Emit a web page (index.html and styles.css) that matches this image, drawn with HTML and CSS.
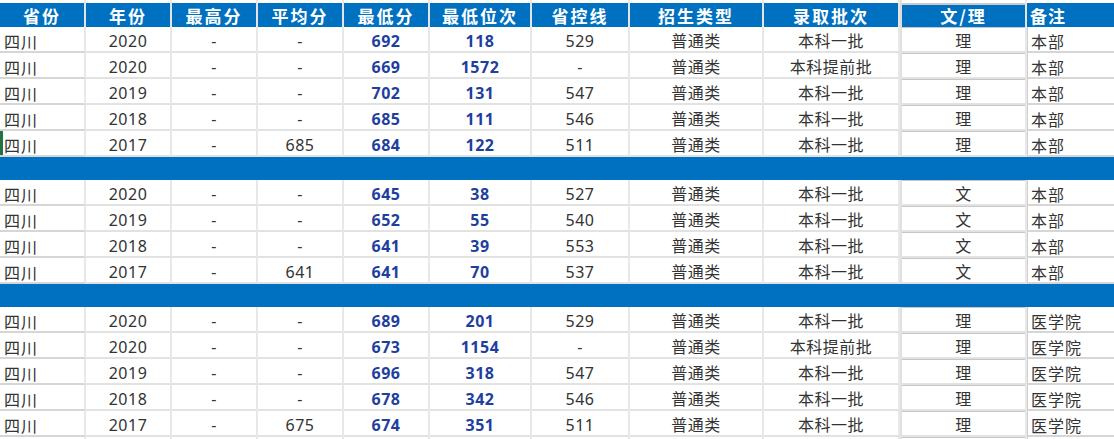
FILE: index.html
```html
<!DOCTYPE html>
<html lang="zh-CN">
<head>
<meta charset="utf-8">
<title>录取分数</title>
<link rel="stylesheet" href="styles.css">
</head>
<body>
<table class="sheet">
  <colgroup>
    <col class="c86"><col class="c86"><col class="c86"><col class="c86"><col class="c86">
    <col class="c102"><col class="c98"><col class="c134"><col class="c136"><col class="c127"><col class="c87">
  </colgroup>
  <tbody>
    <tr class="strip"><td></td><td></td><td></td><td></td><td></td><td></td><td></td><td></td><td></td><td class="wl"></td><td></td></tr>
    <tr class="head">
      <th>省份</th><th>年份</th><th>最高分</th><th>平均分</th><th>最低分</th><th>最低位次</th><th>省控线</th><th>招生类型</th><th>录取批次</th><th class="wl">文/理</th><th class="note">备注</th>
    </tr>
    <tr><td class="prov">四川</td><td>2020</td><td>-</td><td>-</td><td class="b">692</td><td class="b">118</td><td>529</td><td>普通类</td><td>本科一批</td><td class="wl">理</td><td class="note">本部</td></tr>
    <tr><td class="prov">四川</td><td>2020</td><td>-</td><td>-</td><td class="b">669</td><td class="b">1572</td><td>-</td><td>普通类</td><td>本科提前批</td><td class="wl">理</td><td class="note">本部</td></tr>
    <tr><td class="prov">四川</td><td>2019</td><td>-</td><td>-</td><td class="b">702</td><td class="b">131</td><td>547</td><td>普通类</td><td>本科一批</td><td class="wl">理</td><td class="note">本部</td></tr>
    <tr><td class="prov">四川</td><td>2018</td><td>-</td><td>-</td><td class="b">685</td><td class="b">111</td><td>546</td><td>普通类</td><td>本科一批</td><td class="wl">理</td><td class="note">本部</td></tr>
    <tr><td class="prov sel">四川</td><td>2017</td><td>-</td><td>685</td><td class="b">684</td><td class="b">122</td><td>511</td><td>普通类</td><td>本科一批</td><td class="wl">理</td><td class="note">本部</td></tr>
    <tr class="band"><td colspan="11"></td></tr>
    <tr><td class="prov">四川</td><td>2020</td><td>-</td><td>-</td><td class="b">645</td><td class="b">38</td><td>527</td><td>普通类</td><td>本科一批</td><td class="wl">文</td><td class="note">本部</td></tr>
    <tr><td class="prov">四川</td><td>2019</td><td>-</td><td>-</td><td class="b">652</td><td class="b">55</td><td>540</td><td>普通类</td><td>本科一批</td><td class="wl">文</td><td class="note">本部</td></tr>
    <tr><td class="prov">四川</td><td>2018</td><td>-</td><td>-</td><td class="b">641</td><td class="b">39</td><td>553</td><td>普通类</td><td>本科一批</td><td class="wl">文</td><td class="note">本部</td></tr>
    <tr><td class="prov">四川</td><td>2017</td><td>-</td><td>641</td><td class="b">641</td><td class="b">70</td><td>537</td><td>普通类</td><td>本科一批</td><td class="wl">文</td><td class="note">本部</td></tr>
    <tr class="band"><td colspan="11"></td></tr>
    <tr><td class="prov">四川</td><td>2020</td><td>-</td><td>-</td><td class="b">689</td><td class="b">201</td><td>529</td><td>普通类</td><td>本科一批</td><td class="wl">理</td><td class="note">医学院</td></tr>
    <tr><td class="prov">四川</td><td>2020</td><td>-</td><td>-</td><td class="b">673</td><td class="b">1154</td><td>-</td><td>普通类</td><td>本科提前批</td><td class="wl">理</td><td class="note">医学院</td></tr>
    <tr><td class="prov">四川</td><td>2019</td><td>-</td><td>-</td><td class="b">696</td><td class="b">318</td><td>547</td><td>普通类</td><td>本科一批</td><td class="wl">理</td><td class="note">医学院</td></tr>
    <tr><td class="prov">四川</td><td>2018</td><td>-</td><td>-</td><td class="b">678</td><td class="b">342</td><td>546</td><td>普通类</td><td>本科一批</td><td class="wl">理</td><td class="note">医学院</td></tr>
    <tr><td class="prov">四川</td><td>2017</td><td>-</td><td>675</td><td class="b">674</td><td class="b">351</td><td>511</td><td>普通类</td><td>本科一批</td><td class="wl">理</td><td class="note">医学院</td></tr>
    <tr class="tail"><td class="prov"></td><td></td><td></td><td></td><td></td><td></td><td></td><td></td><td></td><td class="wl"></td><td class="note"></td></tr>
  </tbody>
</table>
</body>
</html>
```

FILE: styles.css
```css
html, body {
  margin: 0;
  padding: 0;
  background: #ffffff;
  overflow: hidden;
}

.sheet {
  width: 1114px;
  table-layout: fixed;
  border-collapse: separate;
  border-spacing: 0;
  font-family: "Noto Sans", "Noto Sans CJK SC", sans-serif;
  font-size: 16px;
  color: #333333;
}

.c86 { width: 86px; }
.c102 { width: 102px; }
.c98 { width: 98px; }
.c134 { width: 134px; }
.c136 { width: 136px; }
.c127 { width: 127px; }
.c87 { width: 87px; }

.sheet td,
.sheet th {
  padding: 0;
  text-align: center;
  vertical-align: middle;
  white-space: nowrap;
  overflow: hidden;
  border-right: 2px solid #e8e8e8;
  border-bottom: 2px solid #e2e2e2;
  line-height: 1;
  letter-spacing: 1px;
}

.sheet td:last-child,
.sheet th:last-child {
  border-right: 0;
}

.sheet tr {
  height: 26px;
}

.sheet .strip {
  height: 3px;
}

.sheet .strip td {
  border-bottom: 0;
}

.sheet .tail {
  height: 2px;
}

.sheet .tail td {
  border-bottom: 0;
  padding: 0;
  box-shadow: none;
}

.sheet .head {
  height: 24px;
}

.sheet .head th {
  background: #0070c0;
  color: #ffffff;
  font-family: "Noto Sans CJK SC", sans-serif;
  font-weight: 700;
  font-size: 17px;
  border-right-color: #e4e4e4;
  border-bottom: 0;
  letter-spacing: 2px;
  padding-top: 1px;
}

.sheet .head th.wl {
  border-left: 2px solid #dcdcdc;
  box-shadow: inset 0 2px 0 #c9c9c9;
}

.sheet .head th.note {
  text-align: left;
  padding-left: 3px;
  letter-spacing: 1px;
}

.sheet td {
  padding-top: 3px;
  font-family: "Noto Sans", "Noto Sans CJK SC", sans-serif;
  letter-spacing: 0.5px;
}

.sheet td.prov,
.sheet td.note {
  text-align: left;
  padding-left: 4px;
  font-family: "Noto Sans CJK SC", sans-serif;
  letter-spacing: 1px;
  border-bottom-color: #d6d6d6;
}

.sheet td.note {
  padding-left: 3px;
  border-left: 1px solid #d0d0d0;
}

.sheet td.b {
  color: #1f3f9f;
  font-weight: 700;
}

.sheet td.wl {
  border-left: 2px solid #e0e0e0;
  box-shadow: inset 0 1px 0 #c6c6c6;
}

.sheet .strip td.wl {
  box-shadow: none;
}

.sheet td.sel {
  box-shadow: inset 3px 0 0 #217346;
}

.sheet .band {
  height: 23px;
}

.sheet .band td {
  background: #0070c0;
  border: 0;
  padding: 0;
}
```
